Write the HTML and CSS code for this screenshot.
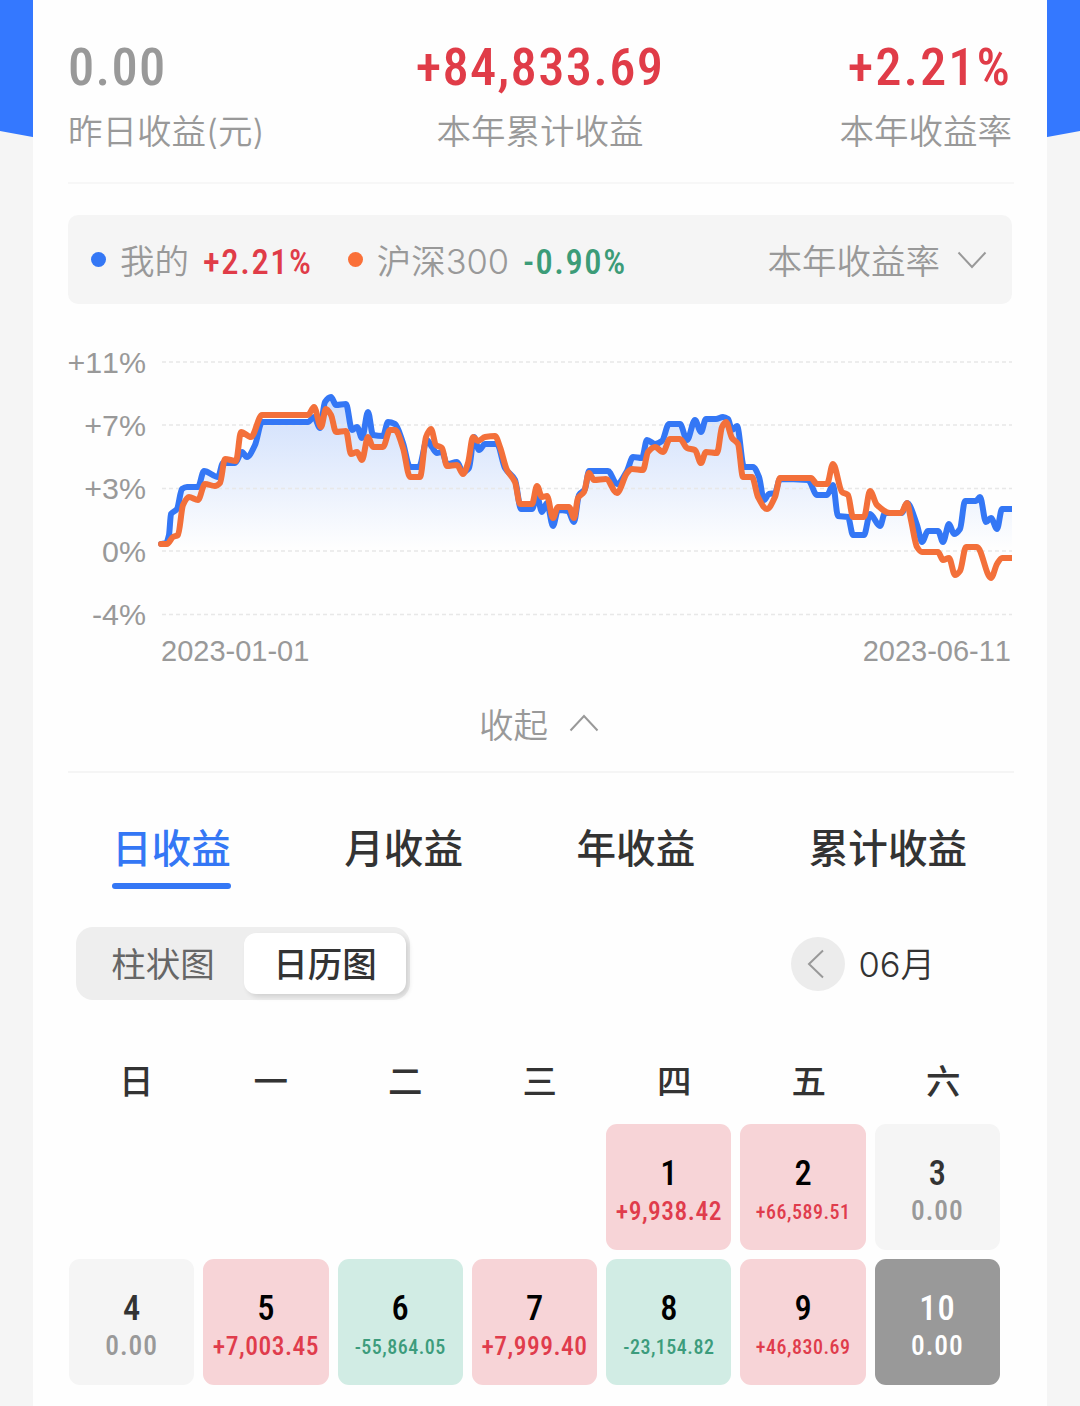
FILE: index.html
```
<!DOCTYPE html>
<html lang="zh-CN">
<head>
    <meta charset="UTF-8">
    <meta name="viewport" content="width=device-width, initial-scale=1.0">
    <title>收益明细</title>
    <link rel="stylesheet" href="styles.css">
</head>
<body>
    <div class="top-bg"></div>
    <div class="card">
        <div class="summary">
            <div class="summary-item">
                <div class="summary-value num gray">0.00</div>
                <div class="summary-label">昨日收益(元)</div>
            </div>
            <div class="summary-item center">
                <div class="summary-value num red">+84,833.69</div>
                <div class="summary-label">本年累计收益</div>
            </div>
            <div class="summary-item right">
                <div class="summary-value num red">+2.21%</div>
                <div class="summary-label">本年收益率</div>
            </div>
        </div>

        <div class="legend">
            <span class="dot dot-blue"></span>
            <span class="legend-name">我的</span>
            <span class="legend-value num red">+2.21%</span>
            <span class="dot dot-orange"></span>
            <span class="legend-name">沪深300</span>
            <span class="legend-value num green">-0.90%</span>
            <span class="legend-select">本年收益率</span>
            <svg class="arrow" width="30" height="18" viewBox="0 0 30 18"><path d="M1.5 1.5 L15 16 L28.5 1.5"/></svg>
        </div>

        <svg class="chart" width="944" height="340" viewBox="68 340 944 340">
            <defs>
                <linearGradient id="areaFill" gradientUnits="userSpaceOnUse" x1="0" y1="397" x2="0" y2="548">
                    <stop offset="0" stop-color="#3477f5" stop-opacity="0.24"/>
                    <stop offset="0.5" stop-color="#3477f5" stop-opacity="0.12"/>
                    <stop offset="1" stop-color="#3477f5" stop-opacity="0"/>
                </linearGradient>
            </defs>
            <path id="area" fill="url(#areaFill)"/>
            <g class="grid-line">
                <path d="M162 362H1012"/>
                <path d="M162 425H1012"/>
                <path d="M162 488.5H1012"/>
                <path d="M162 551H1012"/>
                <path d="M162 614.5H1012"/>
            </g>
            <g class="axis-y">
                <text x="146" y="373">+11%</text>
                <text x="146" y="436">+7%</text>
                <text x="146" y="499">+3%</text>
                <text x="146" y="562">0%</text>
                <text x="146" y="625">-4%</text>
            </g>
            <g class="axis-x">
                <text x="161" y="661">2023-01-01</text>
                <text x="1011" y="661" text-anchor="end">2023-06-11</text>
            </g>
            <path id="lineMine" class="line line-blue"/>
            <path id="lineIndex" class="line line-orange"/>
        </svg>

        <div class="fold">
            <span>收起</span>
            <svg class="arrow" width="30" height="18" viewBox="0 0 30 18"><path d="M1.5 16.5 L15 2 L28.5 16.5"/></svg>
        </div>

        <div class="tabs">
            <div class="tab active">日收益</div>
            <div class="tab">月收益</div>
            <div class="tab">年收益</div>
            <div class="tab">累计收益</div>
        </div>

        <div class="toolbar">
            <div class="switch">
                <div class="switch-item">柱状图</div>
                <div class="switch-item active">日历图</div>
            </div>
            <div class="month">
                <span class="prev-btn">
                    <svg class="arrow" width="18" height="30" viewBox="0 0 18 30"><path d="M16 1.5 L2 15 L16 28.5"/></svg>
                </span>
                <span class="month-text">06月</span>
            </div>
        </div>

        <div class="week">
            <span>日</span><span>一</span><span>二</span><span>三</span><span>四</span><span>五</span><span>六</span>
        </div>

        <div class="calendar">
            <div class="day up first"><b class="num">1</b><i class="num">+9,938.42</i></div>
            <div class="day up"><b class="num">2</b><i class="num small">+66,589.51</i></div>
            <div class="day"><b class="num">3</b><i class="num zero">0.00</i></div>
            <div class="day"><b class="num">4</b><i class="num zero">0.00</i></div>
            <div class="day up"><b class="num">5</b><i class="num">+7,003.45</i></div>
            <div class="day down"><b class="num">6</b><i class="num small">-55,864.05</i></div>
            <div class="day up"><b class="num">7</b><i class="num">+7,999.40</i></div>
            <div class="day down"><b class="num">8</b><i class="num small">-23,154.82</i></div>
            <div class="day up"><b class="num">9</b><i class="num small">+46,830.69</i></div>
            <div class="day today"><b class="num">10</b><i class="num zero">0.00</i></div>
        </div>
    </div>

    <script>
        const mine = [
            [161,544],[166,543],[169,535],[171,514],[177,509],[182,489],[187,487],[198,487],[204,471],[218,477],
            [223,463],[235,463],[242,452],[247,457],[255,445],[262,422],[308,422],[314,417],[320,428],[325,402],
            [331,397],[336,405],[346,404],[352,430],[357,427],[362,438],[368,412],[373,435],[383,436],[388,422],
            [395,424],[403,443],[410,467],[419,467],[427,440],[432,447],[437,453],[442,452],[447,464],[457,462],
            [463,472],[469,468],[474,437],[479,450],[485,444],[497,444],[505,468],[515,480],[521,509],[532,509],
            [537,496],[542,512],[547,503],[553,526],[558,510],[568,511],[574,522],[579,495],[585,489],[589,471],
            [608,471],[617,484],[627,471],[633,457],[642,458],[647,440],[655,444],[662,441],[669,424],[680,424],
            [687,440],[695,420],[701,432],[706,419],[716,419],[723,417],[728,419],[732,430],[737,426],[744,467],
            [753,467],[759,477],[764,500],[769,494],[775,493],[780,479],[808,480],[817,495],[827,495],[833,485],
            [838,516],[848,517],[853,535],[864,535],[870,514],[880,526],[885,513],[902,513],[907,503],[917,525],
            [922,542],[928,531],[938,531],[943,542],[949,524],[954,534],[960,529],[965,501],[976,501],[980,497],
            [986,522],[991,518],[997,529],[1002,509],[1012,509]
        ];
        const index300 = [
            [161,544],[167,544],[173,537],[178,535],[183,505],[189,497],[198,500],[205,484],[215,486],[220,483],
            [225,459],[236,461],[241,432],[251,437],[262,415],[308,415],[314,407],[321,427],[326,409],[331,415],
            [336,432],[346,431],[351,454],[357,452],[362,460],[368,437],[373,447],[383,447],[390,430],[395,430],
            [403,448],[410,477],[420,477],[426,437],[431,429],[436,445],[442,448],[447,466],[457,465],[463,474],
            [468,463],[473,437],[478,441],[485,437],[495,436],[500,447],[507,470],[515,482],[520,504],[532,504],
            [537,486],[542,497],[547,496],[553,518],[558,507],[569,507],[574,518],[578,498],[584,492],[589,473],
            [594,480],[606,479],[617,493],[627,473],[632,469],[643,470],[648,452],[655,447],[663,452],[670,439],
            [680,439],[687,448],[695,450],[701,463],[706,452],[717,453],[722,427],[726,422],[732,438],[738,444],
            [743,477],[752,477],[758,497],[767,509],[775,497],[780,478],[811,478],[817,484],[827,484],[833,464],
            [842,492],[848,495],[853,517],[864,517],[870,491],[877,505],[890,513],[901,513],[907,503],[911,520],
            [917,547],[922,552],[938,552],[943,560],[949,558],[955,575],[960,571],[966,547],[977,547],[991,578],
            [997,564],[1002,558],[1012,558]
        ];

        // 单调三次曲线，避免拐点处过冲
        function smooth(p) {
            const n = p.length;
            const s = [];
            for (let i = 0; i < n - 1; i++) {
                s.push((p[i + 1][1] - p[i][1]) / (p[i + 1][0] - p[i][0]));
            }
            const m = [s[0]];
            for (let i = 1; i < n - 1; i++) {
                m.push(s[i - 1] * s[i] <= 0 ? 0 : 2 * s[i - 1] * s[i] / (s[i - 1] + s[i]));
            }
            m.push(s[n - 2]);
            let d = 'M' + p[0];
            for (let i = 0; i < n - 1; i++) {
                const h = (p[i + 1][0] - p[i][0]) / 3;
                d += 'C' + [p[i][0] + h, p[i][1] + m[i] * h, p[i + 1][0] - h, p[i + 1][1] - m[i + 1] * h, p[i + 1]];
            }
            return d;
        }

        document.getElementById('lineMine').setAttribute('d', smooth(mine));
        document.getElementById('lineIndex').setAttribute('d', smooth(index300));
        document.getElementById('area').setAttribute('d', smooth(mine) + 'V551H161Z');
    </script>
</body>
</html>
```
FILE: styles.css
```
* {
    box-sizing: border-box;
}

body {
    margin: 0;
    height: 1406px;
    overflow: hidden;
    background: #f5f5f5;
    color: #333;
    font-family: "Liberation Sans", "Noto Sans CJK SC", sans-serif;
}

/* 顶部蓝色背景，底边向中间下凹 */
.top-bg {
    position: absolute;
    top: 0;
    left: 0;
    width: 100%;
    height: 230px;
    background: #3478ff;
    clip-path: polygon(0 0, 100% 0, 100% 131px, 50% 230px, 0 131px);
}

.card {
    position: relative;
    width: 1014px;
    height: 1406px;
    margin: 0 auto;
    padding: 0 35px;
    background: #fefefe;
}

.num {
    font-family: Roboto, "Liberation Sans", sans-serif;
    font-stretch: 75%;
    font-weight: 500;
}

.red {
    color: #e03c48;
}

.green {
    color: #3c9c78;
}

.gray {
    color: #999;
}

.summary {
    display: flex;
    height: 184px;
    margin-right: -2px;
    padding: 36px 2px 0 0;
    border-bottom: 2px solid #f7f7f7;
}

.summary-item {
    flex: 1;
}

.summary-item.center {
    text-align: center;
}

.summary-item.right {
    text-align: right;
}

.summary-value {
    font-size: 52.5px;
    line-height: 62px;
    letter-spacing: 1.3px;
}

.right .summary-value {
    letter-spacing: 2px;
}

.summary-label {
    margin-top: 9px;
    font-family: Inter, "Noto Sans CJK SC", sans-serif;
    font-size: 34.5px;
    line-height: 50px;
    font-weight: 350;
    color: #999;
}

.legend {
    display: flex;
    align-items: center;
    height: 89px;
    margin-top: 31px;
    padding: 0 25px 0 23px;
    border-radius: 10px;
    background: #f5f5f5;
}

.dot {
    width: 15px;
    height: 15px;
    border-radius: 50%;
}

.dot-blue {
    background: #3477f5;
}

.dot-orange {
    margin-left: 35px;
    background: #fa7038;
}

.legend-name {
    margin-left: 14px;
    padding-bottom: 2px;
    font-family: Inter, "Noto Sans CJK SC", sans-serif;
    font-size: 34.5px;
    font-weight: 350;
    color: #999;
}

.legend-value {
    margin-left: 14px;
    padding-top: 4px;
    font-size: 34.5px;
    letter-spacing: 1.6px;
}

.legend-select {
    margin-left: auto;
    margin-right: 17px;
    padding-bottom: 2px;
    font-family: Inter, "Noto Sans CJK SC", sans-serif;
    font-size: 34.5px;
    font-weight: 350;
    color: #999;
}

.arrow path {
    fill: none;
    stroke: #999;
    stroke-width: 2;
}

.chart {
    display: block;
    margin-top: 36px;
}

.grid-line path {
    stroke: #e8e8e8;
    stroke-width: 1.5;
    stroke-dasharray: 4 3;
}

.axis-y text {
    font-size: 30.4px;
    font-kerning: none;
    text-anchor: end;
    fill: #999;
}

.axis-x text {
    font-size: 29px;
    font-kerning: none;
    fill: #999;
}

.line {
    fill: none;
    stroke-width: 6;
    stroke-linecap: round;
    stroke-linejoin: round;
}

.line-blue {
    stroke: #3477f5;
}

.line-orange {
    stroke: #f3703a;
}

.fold {
    display: flex;
    align-items: center;
    justify-content: center;
    gap: 21px;
    height: 93px;
    margin-right: -2px;
    padding: 0 4px 5px 0;
    border-bottom: 2px solid #f5f5f5;
    font-size: 34.5px;
    font-weight: 350;
    color: #999;
}

.tabs {
    display: flex;
    gap: 113.5px;
    height: 116px;
    padding: 47px 0 0 44px;
}

.tab {
    height: 69px;
    font-size: 39.6px;
    line-height: 58px;
    font-weight: 500;
}

.tab.active {
    color: #3477f5;
}

.tab.active::after {
    content: "";
    display: block;
    height: 6px;
    margin-top: 5px;
    border-radius: 3px;
    background: #3477f5;
}

.toolbar {
    display: flex;
    align-items: center;
    justify-content: space-between;
    margin-top: 38px;
    padding: 0 77px 0 8px;
}

.switch {
    display: flex;
    width: 334px;
    height: 73px;
    padding: 6px 4px 6px 6px;
    border-radius: 17px;
    background: #eee;
}

.switch-item {
    flex: 1;
    border-radius: 12px;
    font-size: 34.5px;
    line-height: 64px;
    text-align: center;
    color: #666;
}

.switch-item.active {
    background: #fff;
    color: #333;
    font-weight: 500;
    box-shadow: 3px 3px 5px rgba(0, 0, 0, 0.12);
}

.month {
    display: flex;
    align-items: center;
    gap: 13px;
}

.month-text {
    padding-bottom: 4px;
    font-family: Inter, "Noto Sans CJK SC", sans-serif;
    font-size: 34.5px;
    font-weight: 350;
}

.prev-btn {
    display: flex;
    align-items: center;
    justify-content: center;
    width: 54px;
    height: 54px;
    padding-right: 4px;
    border-radius: 50%;
    background: #ececec;
}

.week {
    display: grid;
    grid-template-columns: repeat(7, 134.5px);
    margin: 57px 0 0 1px;
    font-size: 34.5px;
    line-height: 50px;
    font-weight: 500;
    text-align: center;
}

.calendar {
    display: grid;
    grid-template-columns: repeat(7, 125.3px);
    grid-auto-rows: 126px;
    gap: 9px;
    margin: 17px 0 0 1px;
}

.day {
    display: flex;
    flex-direction: column;
    align-items: center;
    padding-top: 29px;
    border-radius: 11px;
    background: #f5f5f5;
}

.day.first {
    grid-column: 5;
}

.day b {
    font-size: 34.5px;
    line-height: 41px;
}

.day i {
    font-size: 25.5px;
    line-height: 34px;
    font-style: normal;
    letter-spacing: 0.5px;
}

.day .small {
    font-size: 20px;
    line-height: 37px;
}

.day .zero {
    font-size: 27.5px;
    color: #999;
    letter-spacing: 1px;
}

.day.up {
    background: #f7d4d7;
    color: #e03c4c;
}

.day.down {
    background: #d1ece4;
    color: #3c9c7c;
}

.day.up b,
.day.down b {
    color: #000;
}

.day.today b {
    letter-spacing: 1px;
}

.day.today,
.day.today .zero {
    background: #999;
    color: #fff;
}
```
